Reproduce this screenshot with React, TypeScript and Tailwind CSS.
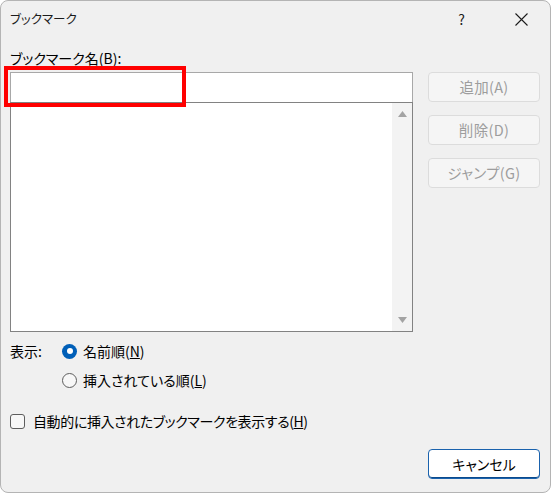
import React, { useState } from 'react';

const font = "font-['Noto_Sans_CJK_JP',sans-serif] [font-feature-settings:'palt']";

const DialogButton: React.FC<{ label: React.ReactNode; disabled?: boolean; primary?: boolean }> = ({ label, disabled, primary }) => (
  <button
    type="button"
    disabled={disabled}
    className={`w-[112px] h-[30px] rounded-[4px] flex items-center justify-center ${
      primary
        ? 'bg-white border border-[#1a62ad] text-black text-[14px] shadow-[inset_0_-1px_0_#0b4a8c]'
        : 'bg-[#f5f5f5] border border-[#dcdcdc] text-[#9d9d9d] text-[14.5px] tracking-[0.3px]'
    }`}
  >
    {label}
  </button>
);

const Radio: React.FC<{ checked: boolean; onClick: () => void; children: React.ReactNode }> = ({ checked, onClick, children }) => (
  <button type="button" onClick={onClick} className="flex items-center gap-[6px] h-[20px] text-[14px] text-black">
    {checked ? (
      <span className="w-[15px] h-[15px] rounded-full bg-[#005fb8] flex items-center justify-center">
        <span className="w-[6px] h-[6px] rounded-full bg-white" />
      </span>
    ) : (
      <span className="w-[15px] h-[15px] rounded-full border border-[#5d5d5d] bg-[#f7f7f7]" />
    )}
    <span>{children}</span>
  </button>
);

export default function App() {
  const [order, setOrder] = useState<'name' | 'insert'>('name');
  const [showHidden, setShowHidden] = useState(false);

  return (
    <div className={`w-[551px] h-[493px] ${font} text-black bg-white`}>
      <div className="relative w-full h-full rounded-[8px] border border-[#b4b4b4] bg-[#f0f0f0] flex flex-col overflow-hidden">
        {/* title bar */}
        <div className="h-[37px] flex items-center pl-[9px] pr-[20px] shrink-0">
          <span className="text-[12.5px] text-[#1b1b1b]">ブックマーク</span>
          <span className="ml-auto text-[14px] text-[#1b1b1b] mr-[50px]">?</span>
          <svg width="13" height="13" viewBox="0 0 13 13" className="mr-[2px]">
            <path d="M0.5 0.5 L12.5 12.5 M12.5 0.5 L0.5 12.5" stroke="#1b1b1b" strokeWidth="1.1" />
          </svg>
        </div>

        <div className="flex pl-[9px] pr-[10px]">
          {/* left column */}
          <div className="w-[403px] flex flex-col">
            <div className="h-[20px] mt-[10px] flex items-center text-[14px]">
              ブックマーク名(<span>B</span>):
            </div>
            <div className="mt-[4px] h-[30px] bg-white border border-[#a8a8a8] border-b-0" />
            <div className="h-[230px] bg-white border border-[#828282] flex">
              <div className="flex-1" />
              <div className="w-[20px] bg-[#f3f3f3] flex flex-col items-center justify-between py-[8px]">
                <svg width="9" height="6" viewBox="0 0 9 6">
                  <path d="M4.5 0 L9 6 L0 6 Z" fill="#a3a3a3" />
                </svg>
                <svg width="9" height="6" viewBox="0 0 9 6">
                  <path d="M0 0 L9 0 L4.5 6 Z" fill="#a3a3a3" />
                </svg>
              </div>
            </div>

            <div className="mt-[9px] flex items-start text-[14px]">
              <span className="w-[52px] h-[20px] flex items-center">表示:</span>
              <div className="flex flex-col gap-[9px]">
                <Radio checked={order === 'name'} onClick={() => setOrder('name')}>
                  名前順(<span className="underline">N</span>)
                </Radio>
                <Radio checked={order === 'insert'} onClick={() => setOrder('insert')}>
                  挿入されている順(<span className="underline">L</span>)
                </Radio>
              </div>
            </div>

            <button
              type="button"
              onClick={() => setShowHidden(!showHidden)}
              className="mt-[21px] flex items-center gap-[8px] h-[20px] text-[14px]"
            >
              <span className="w-[15px] h-[15px] rounded-[3px] border border-[#5d5d5d] bg-[#f7f7f7]" />
              <span className="tracking-[-0.4px]">
                自動的に挿入されたブックマークを表示する(<span className="underline">H</span>)
              </span>
            </button>
          </div>

          {/* right column */}
          <div className="ml-[15px] flex flex-col">
            <div className="mt-[34px] flex flex-col gap-[13px]">
              <DialogButton disabled label="追加(A)" />
              <DialogButton disabled label="削除(D)" />
              <DialogButton disabled label="ジャンプ(G)" />
            </div>
          </div>
        </div>

        <div className="mt-auto mb-[13px] flex justify-end pr-[10px]">
          <DialogButton primary label="キャンセル" />
        </div>

        {/* annotation overlay */}
        <div className="absolute left-[3px] top-[65px] w-[182px] h-[41px] border-[4px] border-[#ff0000]" />
      </div>
    </div>
  );
}
